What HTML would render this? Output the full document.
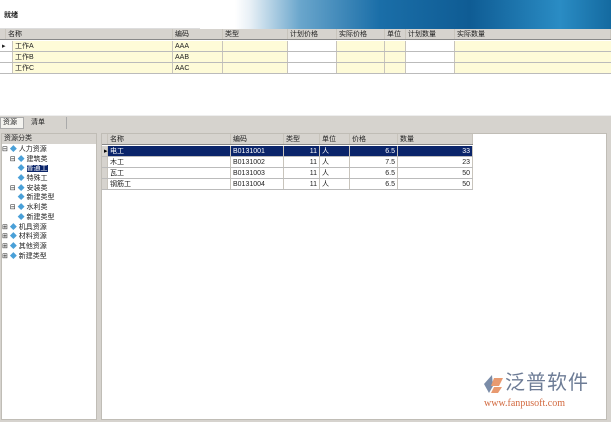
<!DOCTYPE html>
<html><head><meta charset="utf-8"><style>
*{margin:0;padding:0;box-sizing:border-box}
body{width:611px;height:422px;background:#fff;font-family:"Liberation Sans","Noto Sans CJK SC",sans-serif;font-size:7px;color:#222;position:relative;overflow:hidden}
.a{position:absolute}
.c{position:absolute;height:100%;border-right:1px solid #c8c4bc;padding-left:2px;line-height:11px;white-space:nowrap}
.row{position:absolute;left:0;width:611px;height:11px;border-bottom:1px solid #bbb}
.g{color:#4aa0d8;font-size:7px;line-height:1}
.t div{height:9.7px;line-height:9.7px;white-space:pre}
</style></head><body>
<div class="a" style="left:0;top:0;width:611px;height:29px;background:linear-gradient(90deg,#fff 0,#fff 235px,#e8f0f6 250px,#6aa6cc 300px,#1a6ea8 380px,#0f5c94 470px,#2a8cc4 560px,#146aa0 611px)"></div>
<div class="a" style="left:0;top:0;width:200px;height:29px;background:#fff;border-bottom:1px solid #ddd"></div>
<div class="a" style="left:4px;top:10px;font-weight:bold;font-size:7px">就绪</div>
<div class="row" style="top:29px;background:#d6d3ce;border-bottom:1px solid #888">
<div class="c" style="left:0;width:6px"></div>
<div class="c" style="left:6px;width:167px">名称</div>
<div class="c" style="left:173px;width:50px">编码</div>
<div class="c" style="left:223px;width:65px">类型</div>
<div class="c" style="left:288px;width:49px">计划价格</div>
<div class="c" style="left:337px;width:48px">实际价格</div>
<div class="c" style="left:385px;width:21px">单位</div>
<div class="c" style="left:406px;width:49px">计划数量</div>
<div class="c" style="left:455px;width:156px">实际数量</div>
</div>
<div class="a" style="left:0;top:41px;width:611px;height:33px;background:#fefbd8"></div>
<div class="a" style="left:288px;top:41px;width:49px;height:33px;background:#fff"></div>
<div class="a" style="left:406px;top:41px;width:49px;height:33px;background:#fff"></div>
<div class="row" style="top:41px"><div class="c" style="left:0;width:13px;background:#fff">▸</div><div class="c" style="left:13px;width:160px">工作A</div><div class="c" style="left:173px;width:50px">AAA</div><div class="c" style="left:223px;width:65px"></div><div class="c" style="left:288px;width:49px"></div><div class="c" style="left:337px;width:48px"></div><div class="c" style="left:385px;width:21px"></div><div class="c" style="left:406px;width:49px"></div></div>
<div class="row" style="top:52px"><div class="c" style="left:0;width:13px;background:#fff"></div><div class="c" style="left:13px;width:160px">工作B</div><div class="c" style="left:173px;width:50px">AAB</div><div class="c" style="left:223px;width:65px"></div><div class="c" style="left:288px;width:49px"></div><div class="c" style="left:337px;width:48px"></div><div class="c" style="left:385px;width:21px"></div><div class="c" style="left:406px;width:49px"></div></div>
<div class="row" style="top:63px"><div class="c" style="left:0;width:13px;background:#fff"></div><div class="c" style="left:13px;width:160px">工作C</div><div class="c" style="left:173px;width:50px">AAC</div><div class="c" style="left:223px;width:65px"></div><div class="c" style="left:288px;width:49px"></div><div class="c" style="left:337px;width:48px"></div><div class="c" style="left:385px;width:21px"></div><div class="c" style="left:406px;width:49px"></div></div>
<div class="a" style="left:0;top:115px;width:611px;height:15px;background:#d6d3ce;border-top:1px solid #eee"></div>
<div class="a" style="left:0;top:117px;width:24px;height:12px;background:#f4f3ef;border:1px solid #aaa;line-height:10px;padding-left:2px">资源</div>
<div class="a" style="left:31px;top:118px;line-height:10px">清单</div>
<div class="a" style="left:66px;top:117px;width:1px;height:12px;background:#aaa"></div>
<div class="a" style="left:0;top:130px;width:611px;height:292px;background:#d6d3ce"></div>
<div class="a" style="left:1px;top:133px;width:96px;height:287px;background:#fff;border:1px solid #c0bdb6"></div>
<div class="a" style="left:2px;top:134px;width:94px;height:10px;background:#d6d3ce;line-height:10px;padding-left:2px">资源分类</div>
<div class="a t" style="left:2px;top:145px">
<div>⊟ <span class="g">◆</span> 人力资源</div>
<div>    ⊟ <span class="g">◆</span> 建筑类</div>
<div>        <span class="g">◆</span> <span style="background:#0a246a;color:#fff">普通工</span></div>
<div>        <span class="g">◆</span> 特殊工</div>
<div>    ⊟ <span class="g">◆</span> 安装类</div>
<div>        <span class="g">◆</span> 新建类型</div>
<div>    ⊟ <span class="g">◆</span> 水利类</div>
<div>        <span class="g">◆</span> 新建类型</div>
<div>⊞ <span class="g">◆</span> 机具资源</div>
<div>⊞ <span class="g">◆</span> 材料资源</div>
<div>⊞ <span class="g">◆</span> 其他资源</div>
<div>⊞ <span class="g">◆</span> 新建类型</div>
</div>
<div class="a" style="left:101px;top:133px;width:506px;height:287px;background:#fff;border:1px solid #c0bdb6"></div>
<div class="row" style="left:102px;top:134px;width:371px;background:#d6d3ce;border-bottom:1px solid #888">
<div class="c" style="left:0;width:6px"></div><div class="c" style="left:6px;width:123px">名称</div><div class="c" style="left:129px;width:53px">编码</div><div class="c" style="left:182px;width:36px">类型</div><div class="c" style="left:218px;width:30px">单位</div><div class="c" style="left:248px;width:48px">价格</div><div class="c" style="left:296px;width:75px">数量</div></div>
<div class="row" style="left:102px;top:146px;width:371px;background:#0a246a;color:#fff"><div class="c" style="left:0;width:6px;background:#d6d3ce;color:#000">▸</div><div class="c" style="left:6px;width:123px">电工</div><div class="c" style="left:129px;width:53px">B0131001</div><div class="c" style="left:182px;width:36px;text-align:right;padding-right:2px">11</div><div class="c" style="left:218px;width:30px">人</div><div class="c" style="left:248px;width:48px;text-align:right;padding-right:2px">6.5</div><div class="c" style="left:296px;width:75px;text-align:right;padding-right:2px">33</div></div>
<div class="row" style="left:102px;top:157px;width:371px"><div class="c" style="left:0;width:6px;background:#d6d3ce"></div><div class="c" style="left:6px;width:123px">木工</div><div class="c" style="left:129px;width:53px">B0131002</div><div class="c" style="left:182px;width:36px;text-align:right;padding-right:2px">11</div><div class="c" style="left:218px;width:30px">人</div><div class="c" style="left:248px;width:48px;text-align:right;padding-right:2px">7.5</div><div class="c" style="left:296px;width:75px;text-align:right;padding-right:2px">23</div></div>
<div class="row" style="left:102px;top:168px;width:371px"><div class="c" style="left:0;width:6px;background:#d6d3ce"></div><div class="c" style="left:6px;width:123px">瓦工</div><div class="c" style="left:129px;width:53px">B0131003</div><div class="c" style="left:182px;width:36px;text-align:right;padding-right:2px">11</div><div class="c" style="left:218px;width:30px">人</div><div class="c" style="left:248px;width:48px;text-align:right;padding-right:2px">6.5</div><div class="c" style="left:296px;width:75px;text-align:right;padding-right:2px">50</div></div>
<div class="row" style="left:102px;top:179px;width:371px"><div class="c" style="left:0;width:6px;background:#d6d3ce"></div><div class="c" style="left:6px;width:123px">钢筋工</div><div class="c" style="left:129px;width:53px">B0131004</div><div class="c" style="left:182px;width:36px;text-align:right;padding-right:2px">11</div><div class="c" style="left:218px;width:30px">人</div><div class="c" style="left:248px;width:48px;text-align:right;padding-right:2px">6.5</div><div class="c" style="left:296px;width:75px;text-align:right;padding-right:2px">50</div></div>
<svg class="a" style="left:482px;top:374px" width="22" height="20" viewBox="0 0 22 20"><path d="M10 1 L2 10 L7 19 L11 12 Z" fill="#7a8ca8"/><path d="M12 4 L21 4 L17 12 L9 12 Z" fill="#e89a70"/><path d="M12 13 L20 13 L16 19 L9 19 Z" fill="#e89a70"/></svg>
<div class="a" style="left:505px;top:371px;font-size:20px;color:#6d7c96;letter-spacing:1px;line-height:24px">泛普软件</div>
<div class="a" style="left:484px;top:398px;font-size:10px;color:#d2693f;font-family:'Liberation Serif',serif;line-height:12px">www.fanpusoft.com</div>
</body></html>
